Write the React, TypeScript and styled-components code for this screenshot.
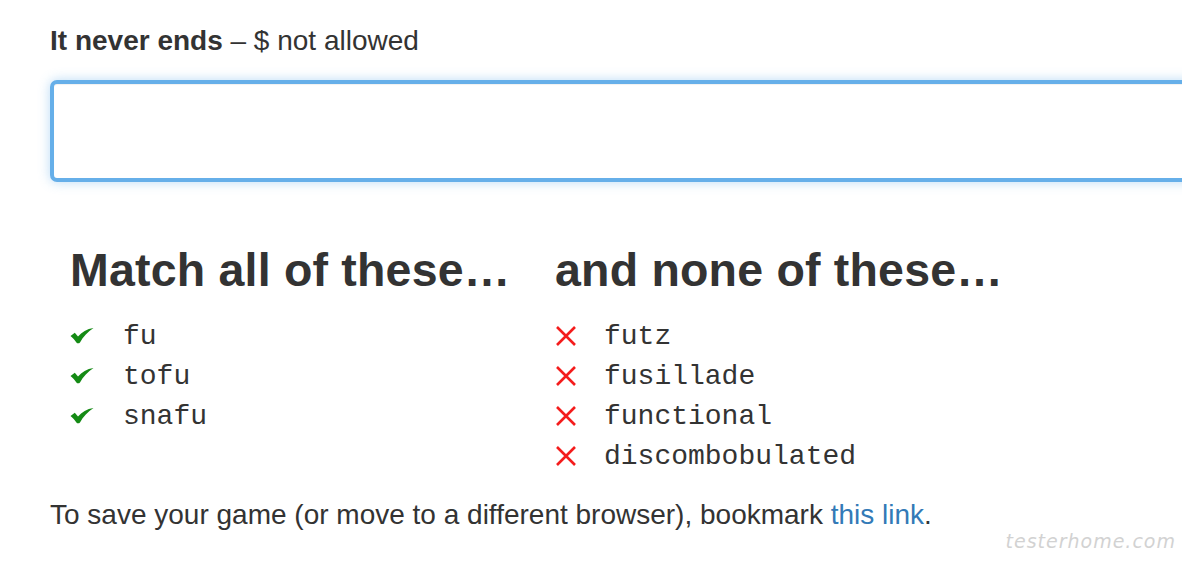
import React from 'react';
import styled, { createGlobalStyle } from 'styled-components';

const GlobalStyle = createGlobalStyle`
  html, body {
    margin: 0;
    padding: 0;
    background: #fff;
    overflow: hidden;
  }
  body {
    font-family: "Liberation Sans", Arial, Helvetica, sans-serif;
    color: #333;
  }
`;

const Page = styled.div`
  position: relative;
  width: 1182px;
  height: 564px;
  padding: 24px 0 0 50px;
  box-sizing: border-box;
  overflow: hidden;
`;

const Label = styled.label`
  display: block;
  font-size: 28px;
  line-height: 34px;
  margin-bottom: 22px;
`;

const Strong = styled.strong`
  font-weight: 700;
`;

const PatternInput = styled.input`
  display: block;
  width: 1200px;
  height: 102px;
  box-sizing: border-box;
  border: 4px solid #66afe9;
  border-radius: 7px;
  background: #fff;
  outline: none;
  box-shadow: 0 0 12px rgba(102, 175, 233, 0.45), inset 0 1px 1px rgba(0, 0, 0, 0.06);
  font-size: 28px;
  padding: 0 16px;
`;

const Columns = styled.div`
  display: grid;
  grid-template-columns: 485px 485px;
  margin: 62px 0 0 20px;
`;

const Column = styled.section``;

const Heading = styled.h2`
  margin: 0 0 20px;
  font-size: 46.5px;
  line-height: 52px;
  font-weight: 700;
  color: #333;
  letter-spacing: 0.2px;
`;

const List = styled.ul`
  list-style: none;
  margin: 0;
  padding: 0;
`;

const Item = styled.li`
  display: flex;
  align-items: center;
  height: 40px;
  font-family: "Liberation Mono", "Courier New", monospace;
  font-size: 28px;
  color: #333;
`;

const Mark = styled.span<{ $width: number }>`
  display: inline-flex;
  align-items: center;
  width: ${(p) => p.$width}px;
  flex: none;
`;

const Footer = styled.p`
  margin: 22px 0 0;
  font-size: 28px;
  line-height: 34px;
`;

const Link = styled.a`
  color: #337ab7;
  text-decoration: none;
`;

const Watermark = styled.div`
  position: absolute;
  right: 6px;
  bottom: 12px;
  font-family: "DejaVu Sans", sans-serif;
  font-weight: 200;
  font-style: italic;
  font-size: 19px;
  letter-spacing: 1px;
  color: #d2d2d2;
`;

// heavy check mark, drawn to match the chunky glyph in the reference
const Check = () => (
  <svg width="24" height="16" viewBox="0 0 24 16">
    <path
      d="M0.5 8 L4.8 4.8 L8 8.6 C11.8 4 16.8 1 23.5 0 C18 3.6 13 8.8 10 14.4 C9 15.6 7.2 15.6 6.4 14.4 C4.8 12 2.8 9.8 0.5 8 Z"
      fill="#148a14"
    />
  </svg>
);

const Cross = () => (
  <svg width="22" height="20" viewBox="0 0 22 20">
    <path d="M2 1 L20 19 M20 1 L2 19" stroke="#f41c1c" strokeWidth="2.6" fill="none" />
  </svg>
);

const matches = ['fu', 'tofu', 'snafu'];
const rejects = ['futz', 'fusillade', 'functional', 'discombobulated'];

export default function App() {
  return (
    <>
      <GlobalStyle />
      <Page>
        <Label>
          <Strong>It never ends</Strong> – $ not allowed
        </Label>
        <PatternInput type="text" />

        <Columns>
          <Column>
            <Heading>Match all of these…</Heading>
            <List>
              {matches.map((word) => (
                <Item key={word}>
                  <Mark $width={53}>
                    <Check />
                  </Mark>
                  {word}
                </Item>
              ))}
            </List>
          </Column>
          <Column>
            <Heading>and none of these…</Heading>
            <List>
              {rejects.map((word) => (
                <Item key={word}>
                  <Mark $width={49}>
                    <Cross />
                  </Mark>
                  {word}
                </Item>
              ))}
            </List>
          </Column>
        </Columns>

        <Footer>
          To save your game (or move to a different browser), bookmark <Link href="#">this link</Link>.
        </Footer>
        <Watermark>testerhome.com</Watermark>
      </Page>
    </>
  );
}
